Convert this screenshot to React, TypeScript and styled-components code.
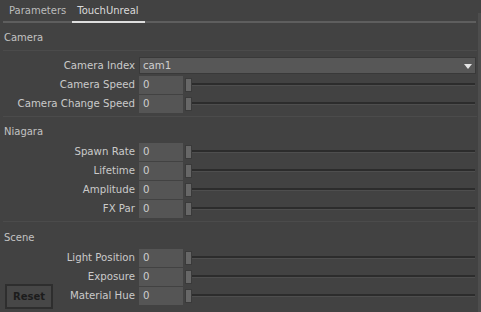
import styled, { createGlobalStyle } from "styled-components";

const GlobalStyle = createGlobalStyle`
  html, body {
    margin: 0;
    padding: 0;
    background: #424242;
  }
  body {
    font-family: "DejaVu Sans", Verdana, sans-serif;
    font-size: 10px;
    color: #c6c6c6;
  }
`;

const Page = styled.div`
  position: relative;
  width: 481px;
  height: 312px;
  overflow: hidden;
  display: flex;
  background: #424242;
`;

const Panel = styled.div`
  flex: 1;
  display: flex;
  flex-direction: column;
`;

const ScrollStrip = styled.div`
  width: 3px;
  margin-top: 13px;
  margin-left: 1px;
  background: #4d4d4d;
`;

const TabBar = styled.div`
  display: flex;
  height: 21px;
  margin: 0 1px 0 3px;
  border-bottom: 2px solid #5e5e5e;
`;

const Tab = styled.div<{ $active?: boolean }>`
  display: flex;
  align-items: center;
  padding: 0 6px 0 ${(p) => (p.$active ? "5px" : "6px")};
  margin-bottom: -2px;
  border-bottom: 2px solid ${(p) => (p.$active ? "#dedede" : "transparent")};
  color: ${(p) => (p.$active ? "#dadada" : "#bcbcbc")};
  font-size: 10px;
`;

const Section = styled.section<{ $last?: boolean }>`
  display: flex;
  flex-direction: column;
  border-bottom: 1px solid ${(p) => (p.$last ? "transparent" : "#4b4b4b")};
  margin-left: 3px;
`;

const SectionHeader = styled.div<{ $height: number; $top: number; $ruled?: boolean }>`
  height: ${(p) => p.$height}px;
  box-sizing: border-box;
  padding: ${(p) => p.$top}px 0 0 1px;
  display: flex;
  align-items: center;
  color: #c2c2c2;
  border-bottom: 1px solid ${(p) => (p.$ruled ? "#4b4b4b" : "transparent")};
`;

const Rows = styled.div<{ $top: number; $bottom: number }>`
  display: flex;
  flex-direction: column;
  padding: ${(p) => p.$top}px 0 ${(p) => p.$bottom}px;
`;

const Row = styled.div`
  display: grid;
  grid-template-columns: 132px 1fr;
  column-gap: 4px;
  height: 19px;
  align-items: center;
`;

const Label = styled.span`
  text-align: right;
  font-size: 10.2px;
  color: #cacaca;
  white-space: nowrap;
`;

const Dropdown = styled.div`
  position: relative;
  height: 17px;
  margin-right: 1px;
  box-sizing: border-box;
  border: 1px solid #393939;
  background: #575757;
  display: flex;
  align-items: center;
  padding-left: 3px;
  font-size: 10.2px;
  color: #cfcfcf;
`;

const Arrow = styled.span`
  position: absolute;
  right: 3px;
  top: 6px;
  width: 0;
  height: 0;
  border-left: 4px solid transparent;
  border-right: 4px solid transparent;
  border-top: 5px solid #e4e4e4;
`;

const Slider = styled.div`
  display: flex;
  align-items: center;
  height: 19px;
`;

const Field = styled.div`
  width: 44px;
  height: 18px;
  box-sizing: border-box;
  background: #555555;
  display: flex;
  align-items: center;
  padding-left: 4px;
  font-size: 10.2px;
  color: #cdcdcd;
`;

const Handle = styled.div`
  width: 7px;
  height: 14px;
  margin-left: 2px;
  box-sizing: border-box;
  background: #676767;
  border: 1px solid #3a3a3a;
`;

const Track = styled.div`
  flex: 1;
  height: 3px;
  margin-right: 2px;
  box-sizing: border-box;
  border-top: 2px solid #2c2c2c;
  border-bottom: 1px solid #4e4e4e;
`;

const ResetButton = styled.button`
  position: absolute;
  left: 5px;
  top: 284px;
  width: 48px;
  height: 25px;
  box-sizing: border-box;
  border: 2px solid #2e2e2e;
  background: #474747;
  color: #1c1c1c;
  font-family: "DejaVu Sans", Verdana, sans-serif;
  font-weight: bold;
  font-size: 10px;
  padding: 0;
`;

function SliderRow({ label, value }: { label: string; value: string }) {
  return (
    <Row>
      <Label>{label}</Label>
      <Slider>
        <Field>{value}</Field>
        <Handle />
        <Track />
      </Slider>
    </Row>
  );
}

const niagara = ["Spawn Rate", "Lifetime", "Amplitude", "FX Par"];
const scene = ["Light Position", "Exposure", "Material Hue"];

export default function App() {
  return (
    <Page>
      <GlobalStyle />
      <Panel>
        <TabBar>
          <Tab>Parameters</Tab>
          <Tab $active>TouchUnreal</Tab>
        </TabBar>

        <Section>
          <SectionHeader $height={28} $top={1} $ruled>
            Camera
          </SectionHeader>
          <Rows $top={5} $bottom={3}>
            <Row>
              <Label>Camera Index</Label>
              <Dropdown>
                cam1
                <Arrow />
              </Dropdown>
            </Row>
            <SliderRow label="Camera Speed" value="0" />
            <SliderRow label="Camera Change Speed" value="0" />
          </Rows>
        </Section>

        <Section>
          <SectionHeader $height={25} $top={5}>
            Niagara
          </SectionHeader>
          <Rows $top={0} $bottom={3}>
            {niagara.map((n) => (
              <SliderRow key={n} label={n} value="0" />
            ))}
          </Rows>
        </Section>

        <Section $last>
          <SectionHeader $height={26} $top={5}>
            Scene
          </SectionHeader>
          <Rows $top={0} $bottom={0}>
            {scene.map((n) => (
              <SliderRow key={n} label={n} value="0" />
            ))}
          </Rows>
        </Section>
      </Panel>
      <ScrollStrip />
      <ResetButton>Reset</ResetButton>
    </Page>
  );
}
